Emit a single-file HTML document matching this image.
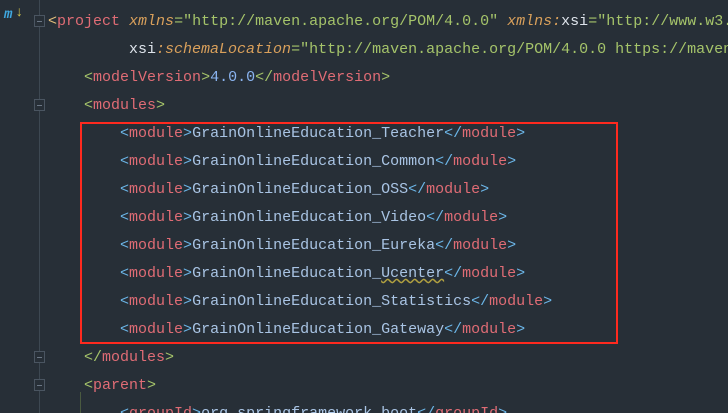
<!DOCTYPE html>
<html style="margin:0;width:728px;height:413px;overflow:hidden"><head><style>
body{margin:0;width:728px;height:413px;background:#272f37;overflow:hidden;position:relative;font-family:"Liberation Mono",monospace;font-size:15px;}
.l{position:absolute;left:48px;white-space:pre;height:28px;line-height:28px;color:#c8cfd8;max-width:680px;overflow:hidden}
.t{color:#e06c75}.g{color:#a5c46a}.b{color:#6cb6e8}.y{color:#e5c07b}
.s{color:#a5c46a}.a{color:#d9a05b;font-style:italic}.n{color:#8ab4f0}.m{color:#a9c4e4}.w{color:#dde3ea}
.vl{position:absolute;left:39px;top:0;width:1px;height:413px;background:#3d4852}
.fold{position:absolute;left:34px;width:11px;height:12px;background:#272f37;border:1px solid #4a5561;box-sizing:border-box}
.fold:after{content:"";position:absolute;left:2px;top:5px;width:5px;height:1px;background:#6b7785}
</style></head><body>
<div class="vl"></div>
<div class="fold" style="top:15px"></div>
<div class="fold" style="top:99px"></div>
<div class="fold" style="top:351px"></div>
<div class="fold" style="top:379px"></div>
<div style="position:absolute;left:4px;top:7px;color:#3fa8e0;font-style:italic;font-weight:bold;font-size:14px">m</div>
<div style="position:absolute;left:15px;top:5px;color:#d6c94c;font-size:14px">↓</div>
<div style="position:absolute;left:80px;top:392px;width:1px;height:21px;background:#4a5a40"></div>
<div class="l" style="top:8px"><span class="y">&lt;</span><span class="t">project</span> <span class="a">xmlns</span><span class="s">="http://maven.apache.org/POM/4.0.0"</span> <span class="a">xmlns</span><span class="a">:</span><span class="w">xsi</span><span class="s">="http://www.w3.org/2001/XMLSchema-instance"</span></div>
<div class="l" style="top:36px">         <span class="w">xsi</span><span class="a">:schemaLocation</span><span class="s">="http://maven.apache.org/POM/4.0.0 https://maven.apache.org/xsd/maven-4.0.0.xsd"&gt;</span></div>
<div class="l" style="top:64px">    <span class="g">&lt;</span><span class="t">modelVersion</span><span class="g">&gt;</span><span class="n">4.0.0</span><span class="g">&lt;/</span><span class="t">modelVersion</span><span class="g">&gt;</span></div>
<div class="l" style="top:92px">    <span class="g">&lt;</span><span class="t">modules</span><span class="g">&gt;</span></div>
<div class="l" style="top:120px">        <span class="b">&lt;</span><span class="t">module</span><span class="b">&gt;</span><span class="m">GrainOnlineEducation_Teacher</span><span class="b">&lt;/</span><span class="t">module</span><span class="b">&gt;</span></div>
<div class="l" style="top:148px">        <span class="b">&lt;</span><span class="t">module</span><span class="b">&gt;</span><span class="m">GrainOnlineEducation_Common</span><span class="b">&lt;/</span><span class="t">module</span><span class="b">&gt;</span></div>
<div class="l" style="top:176px">        <span class="b">&lt;</span><span class="t">module</span><span class="b">&gt;</span><span class="m">GrainOnlineEducation_OSS</span><span class="b">&lt;/</span><span class="t">module</span><span class="b">&gt;</span></div>
<div class="l" style="top:204px">        <span class="b">&lt;</span><span class="t">module</span><span class="b">&gt;</span><span class="m">GrainOnlineEducation_Video</span><span class="b">&lt;/</span><span class="t">module</span><span class="b">&gt;</span></div>
<div class="l" style="top:232px">        <span class="b">&lt;</span><span class="t">module</span><span class="b">&gt;</span><span class="m">GrainOnlineEducation_Eureka</span><span class="b">&lt;/</span><span class="t">module</span><span class="b">&gt;</span></div>
<div class="l" style="top:260px">        <span class="b">&lt;</span><span class="t">module</span><span class="b">&gt;</span><span class="m">GrainOnlineEducation_<span style="text-decoration:underline wavy #b0a040">Ucenter</span></span><span class="b">&lt;/</span><span class="t">module</span><span class="b">&gt;</span></div>
<div class="l" style="top:288px">        <span class="b">&lt;</span><span class="t">module</span><span class="b">&gt;</span><span class="m">GrainOnlineEducation_Statistics</span><span class="b">&lt;/</span><span class="t">module</span><span class="b">&gt;</span></div>
<div class="l" style="top:316px">        <span class="b">&lt;</span><span class="t">module</span><span class="b">&gt;</span><span class="m">GrainOnlineEducation_Gateway</span><span class="b">&lt;/</span><span class="t">module</span><span class="b">&gt;</span></div>
<div class="l" style="top:344px">    <span class="g">&lt;/</span><span class="t">modules</span><span class="g">&gt;</span></div>
<div class="l" style="top:372px">    <span class="g">&lt;</span><span class="t">parent</span><span class="g">&gt;</span></div>
<div class="l" style="top:400px;height:13px">        <span class="b">&lt;</span><span class="t">groupId</span><span class="b">&gt;</span><span class="m">org.springframework.boot</span><span class="b">&lt;/</span><span class="t">groupId</span><span class="b">&gt;</span></div>
<div style="position:absolute;left:80px;top:122px;width:538px;height:222px;border:2px solid #ff2a1f;box-sizing:border-box"></div>
</body></html>
